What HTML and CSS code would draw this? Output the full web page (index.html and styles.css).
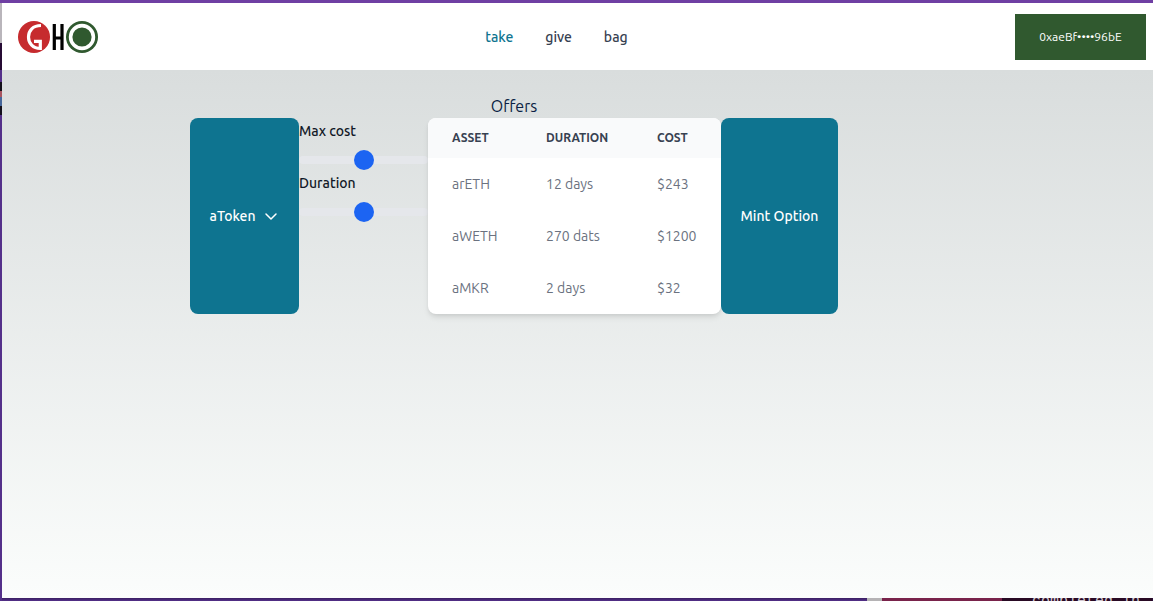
FILE: index.html
```html
<!DOCTYPE html>
<html lang="en">
<head>
<meta charset="utf-8">
<title>GHO</title>
<link rel="stylesheet" href="styles.css">
</head>
<body>
<div class="app">
  <header class="header">
    <a class="brand" href="#" aria-label="GHO">
      <svg width="80" height="32" viewBox="0 0 80 32" aria-hidden="true">
        <circle cx="16" cy="16" r="16" fill="#c62b2e"/>
        <path d="M23 4.500C15 4.500 10.500 9.500 10.500 16C10.500 22.500 15 27.500 22.300 27.500V20.300H16" fill="none" stroke="#fff" stroke-width="3.200"/>
        <path d="M36.300 3V29M44 3V29M36 17H44" fill="none" stroke="#000" stroke-width="3.200"/>
        <circle cx="64" cy="16" r="16" fill="#30592f"/>
        <circle cx="64" cy="16" r="11.400" fill="none" stroke="#fff" stroke-width="3.600"/>
      </svg>
    </a>
    <nav class="nav">
      <a class="nav-link nav-link-active" href="#">take</a>
      <a class="nav-link" href="#">give</a>
      <a class="nav-link" href="#">bag</a>
    </nav>
    <button class="wallet" type="button">0xaeBf••••96bE</button>
  </header>
  <main class="main">
    <div class="container">
      <section class="panel">
        <h1 class="title">Offers</h1>
        <div class="row">
          <button class="action token" type="button">aToken
            <svg width="16" height="16" viewBox="0 0 16 16" fill="none" stroke="currentColor" stroke-width="1.500" stroke-linecap="round" stroke-linejoin="round" aria-hidden="true"><path d="M3 6L8 11L13 6"/></svg>
          </button>
          <div class="filters">
            <label class="label" for="cost">Max cost</label>
            <input class="range" id="cost" type="range">
            <label class="label" for="duration">Duration</label>
            <input class="range" id="duration" type="range">
          </div>
          <div class="card">
            <table class="offers">
              <colgroup><col class="col-asset"><col class="col-duration"><col class="col-cost"></colgroup>
              <thead><tr><th>Asset</th><th>Duration</th><th>Cost</th></tr></thead>
              <tbody>
                <tr><td>arETH</td><td>12 days</td><td>$243</td></tr>
                <tr><td>aWETH</td><td>270 dats</td><td>$1200</td></tr>
                <tr><td>aMKR</td><td>2 days</td><td>$32</td></tr>
              </tbody>
            </table>
          </div>
          <button class="action mint" type="button">Mint Option</button>
        </div>
      </section>
    </div>
  </main>
</div>
<footer class="strip">
  <span class="strip-purple"></span>
  <span class="strip-gray"></span>
  <span class="strip-wine"></span>
  <span class="strip-terminal">completed in 15</span>
</footer>
</body>
</html>
```
FILE: styles.css
```css
* {
  box-sizing: border-box;
}

body {
  margin: 0;
  min-height: 100vh;
  display: flex;
  flex-direction: column;
  border-top: 3px solid #6f3fa3;
  padding-left: 2px;
  background: linear-gradient(#b9b5bb 0 43px, #260b34 43px 70px, #54308a 70px 82px, #14101c 82px 91px, #a85560 91px 97px, #46669a 97px 106px, #14101c 106px 115px, #54308a 115px);
  font-family: Ubuntu, "Noto Sans", sans-serif;
  font-size: 14px;
  line-height: 20px;
}

button {
  border: 0;
  font-family: inherit;
  cursor: pointer;
}

.app {
  flex: 1;
  display: flex;
  flex-direction: column;
}

.header {
  display: flex;
  justify-content: space-between;
  align-items: center;
  padding: 11px 7px 10px 16px;
  background: #fff;
}

.brand {
  display: flex;
}

.nav {
  display: flex;
  gap: 32px;
}

.nav-link {
  color: #374151;
  font-weight: 500;
  text-decoration: none;
}

.nav-link-active {
  color: #0e7490;
}

.wallet {
  width: 131px;
  height: 46px;
  padding: 0 0 2px;
  background: #30592f;
  color: #fff;
  font-size: 12px;
}

.main {
  flex: 1;
  padding: 24px 0;
  background: linear-gradient(#d9dddd, #fbfdfc);
}

.container {
  max-width: 775px;
  margin: 0 auto;
}

.panel {
  width: fit-content;
}

.title {
  margin: 0;
  color: #0b1f44;
  font-size: 16px;
  font-weight: 400;
  line-height: 24px;
  text-align: center;
}

.row {
  display: flex;
}

.action {
  display: flex;
  align-items: center;
  justify-content: center;
  gap: 8px;
  padding: 0;
  border-radius: 8px;
  background: #0e7490;
  color: #fff;
  font-size: 14px;
  font-weight: 500;
}

.token {
  width: 109px;
}

.mint {
  width: 117px;
}

.filters {
  width: 129px;
}

.label {
  display: block;
  margin: 3px 0 9px;
  color: #111827;
  font-weight: 500;
}

.range {
  display: block;
  width: 100%;
  height: 20px;
  margin: 0;
  appearance: none;
  background: transparent;
}

.range::-webkit-slider-runnable-track {
  height: 8px;
  border-radius: 8px;
  background: #e5e7eb;
}

.range::-webkit-slider-thumb {
  appearance: none;
  width: 20px;
  height: 20px;
  margin-top: -6px;
  border-radius: 50%;
  background: #1c64f2;
}

.card {
  overflow: hidden;
  border-radius: 8px;
  background: #fff;
  box-shadow: 0 4px 6px -1px rgb(0 0 0 / 10%), 0 2px 4px -1px rgb(0 0 0 / 6%);
}

.offers {
  width: 293px;
  table-layout: fixed;
  border-collapse: collapse;
  text-align: left;
}

.col-asset {
  width: 94px;
}

.col-duration {
  width: 111px;
}

.col-cost {
  width: 88px;
}

.offers th {
  padding: 12px 0 12px 24px;
  background: #f9fafb;
  color: #374151;
  font-size: 12px;
  font-weight: 700;
  line-height: 16px;
  text-transform: uppercase;
}

.offers td {
  padding: 16px 0 16px 24px;
  color: #6b7280;
}

.strip {
  display: flex;
  height: 3px;
  overflow: hidden;
  background: #54308a;
}

.strip-purple {
  flex: 1;
  background: linear-gradient(#3a1f61, #54308a);
}

.strip-gray {
  width: 15px;
  background: #b5b3b5;
}

.strip-wine {
  width: 120px;
  background: #79234b;
}

.strip-terminal {
  width: 151px;
  padding-left: 30px;
  background: #290a24;
  color: #d0c6d0;
  font-family: "Liberation Mono", monospace;
  font-size: 15px;
  line-height: 8px;
  white-space: nowrap;
}
```
